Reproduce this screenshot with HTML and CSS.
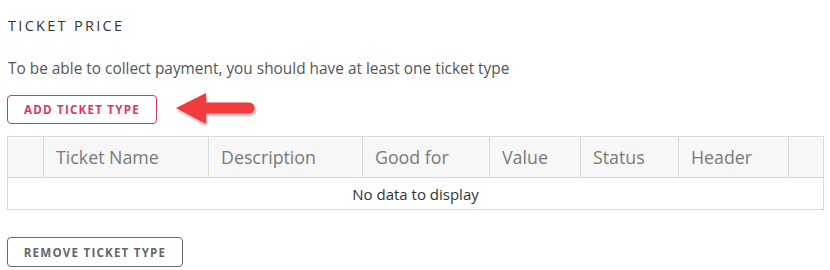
FILE: index.html
```html
<!DOCTYPE html>
<html>
<head>
<meta charset="utf-8">
<link rel="stylesheet" href="styles.css">
</head>
<body>
<div class="page">
  <h2 class="title">TICKET PRICE</h2>
  <p class="hint">To be able to collect payment, you should have at least one ticket type</p>
  <div class="action-row">
    <button class="btn btn-add">ADD TICKET TYPE</button>
    <svg class="arrow" width="86" height="40" viewBox="0 0 86 40">
      <defs>
        <filter id="sh" x="-20%" y="-30%" width="140%" height="170%">
          <feDropShadow dx="1" dy="2" stdDeviation="1.6" flood-color="#000" flood-opacity="0.35"/>
        </filter>
      </defs>
      <g filter="url(#sh)" fill="#f23b3e">
        <polygon points="2,16 32,1 32,32"/>
        <path d="M30 10.5 H75 a5.5 5.5 0 0 1 0 11 H30 Z"/>
      </g>
    </svg>
  </div>
  <table class="grid">
    <colgroup>
      <col class="c-sel">
      <col class="c-name">
      <col class="c-desc">
      <col class="c-good">
      <col class="c-val">
      <col class="c-stat">
      <col class="c-head">
      <col class="c-end">
    </colgroup>
    <thead>
      <tr>
        <th></th>
        <th>Ticket Name</th>
        <th>Description</th>
        <th>Good for</th>
        <th>Value</th>
        <th>Status</th>
        <th>Header</th>
        <th></th>
      </tr>
    </thead>
    <tbody>
      <tr><td class="empty" colspan="8">No data to display</td></tr>
    </tbody>
  </table>
  <button class="btn btn-remove">REMOVE TICKET TYPE</button>
</div>
</body>
</html>
```

FILE: styles.css
```css
html, body {
  margin: 0;
  padding: 0;
  background: #fff;
}
body {
  font-family: "Open Sans", "Noto Sans", sans-serif;
}
.page {
  padding: 0 7px;
}
.title {
  margin: 0;
  padding-top: 16px;
  padding-left: 1px;
  font-size: 14.5px;
  font-weight: 400;
  letter-spacing: 2.3px;
  color: #333;
  line-height: 20px;
}
.hint {
  margin: 23px 0 0 1px;
  font-size: 15.4px;
  line-height: 20px;
  color: #555;
}
.action-row {
  display: flex;
  align-items: center;
  margin-top: 16px;
  height: 29px;
}
.btn {
  font-family: "Open Sans", "Noto Sans", sans-serif;
  font-weight: 700;
  font-size: 11.6px;
  letter-spacing: 1.2px;
  background: #fff;
  border-radius: 4px;
  cursor: pointer;
  padding: 0;
  display: block;
}
.btn-add {
  width: 150px;
  height: 29px;
  border: 1px solid #d6336c;
  color: #e0336a;
}
.arrow {
  margin: -4px 0 -8px 17px;
  display: block;
  flex: none;
}
.grid {
  margin-top: 12px;
  width: 816px;
  border-collapse: collapse;
  table-layout: fixed;
  border: 1px solid #d9d9d9;
}
.c-sel { width: 36px; }
.c-name { width: 165px; }
.c-desc { width: 154px; }
.c-good { width: 127px; }
.c-val { width: 91px; }
.c-stat { width: 98px; }
.c-head { width: 110px; }
.c-end { width: 35px; }
.grid th {
  height: 40px;
  background: #f7f7f7;
  border: 1px solid #d9d9d9;
  font-weight: 400;
  font-size: 17.8px;
  color: #7a7a7a;
  text-align: left;
  padding: 0 0 0 12px;
}
.grid td.empty {
  height: 31px;
  text-align: center;
  font-size: 15px;
  color: #333;
  padding: 0;
}
.btn-remove {
  margin-top: 27px;
  width: 176px;
  height: 30px;
  border: 1px solid #6b6b6b;
  color: #666;
}
```
